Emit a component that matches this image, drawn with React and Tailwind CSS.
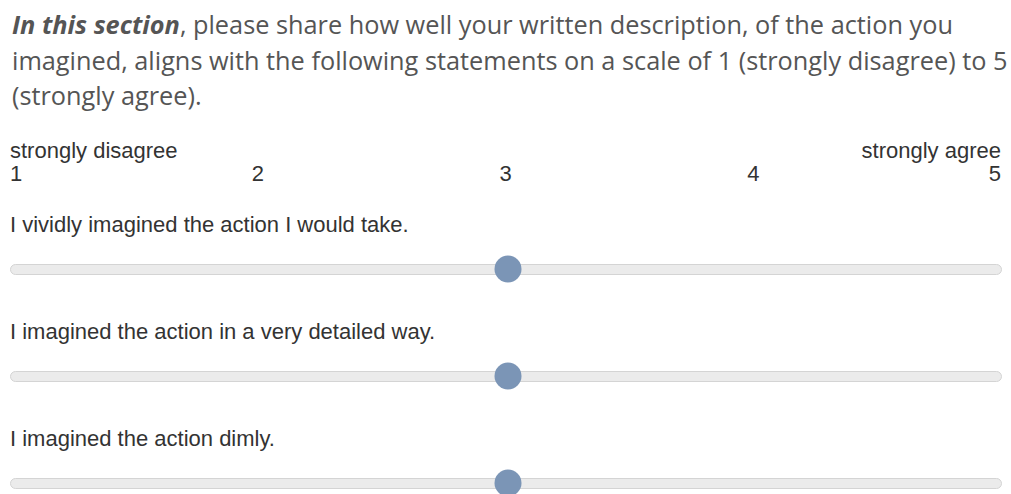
import React from 'react';

const statements = [
  'I vividly imagined the action I would take.',
  'I imagined the action in a very detailed way.',
  'I imagined the action dimly.',
];

const SliderRow = ({ label, value }) => {
  // value on a 1..5 scale, thumb placed along the track
  const pct = ((value - 1) / 4) * 100;
  return (
    <div className="flex flex-col">
      <p className="text-[22px] leading-[24px] text-[#333]">{label}</p>
      <div className="relative mt-[27px] mr-[-1px] h-[11px] rounded-full border border-[#d4d4d4] bg-[#ebebeb]">
        <div
          className="absolute top-1/2 ml-[2px] h-[27px] w-[27px] -translate-x-1/2 -translate-y-1/2 rounded-full bg-[#7b95b6]"
          style={{ left: `${pct}%` }}
        />
      </div>
    </div>
  );
};

export default function App() {
  return (
    <div className="h-[494px] w-[1011px] overflow-hidden bg-white px-[10px] pt-[7px]">
      <p
        className="ml-[2px] mr-[-12px] text-[25.3px] leading-[35.5px] text-[#555]"
        style={{ fontFamily: '"Open Sans", sans-serif' }}
      >
        <em className="font-bold">In this section</em>, please share how well your written description, of the
        action you imagined, aligns with the following statements on a scale of 1 (strongly disagree) to 5
        (strongly agree).
      </p>

      <div className="mt-[25px]" style={{ fontFamily: '"Liberation Sans", Arial, sans-serif' }}>
        <div className="flex justify-between text-[22px] leading-[23px] text-[#333]">
          <span>strongly disagree</span>
          <span>strongly agree</span>
        </div>
        <div className="grid grid-cols-4 text-[22px] leading-[23px] text-[#333]">
          <div className="flex justify-between">
            <span>1</span>
            <span className="translate-x-1/2">2</span>
          </div>
          <div className="flex justify-end">
            <span className="translate-x-1/2">3</span>
          </div>
          <div className="flex justify-end">
            <span className="translate-x-1/2">4</span>
          </div>
          <div className="flex justify-end">
            <span>5</span>
          </div>
        </div>

        <div className="mt-[28px] flex flex-col gap-[45px]">
          {statements.map((s) => (
            <SliderRow key={s} label={s} value={3} />
          ))}
        </div>
      </div>
    </div>
  );
}
